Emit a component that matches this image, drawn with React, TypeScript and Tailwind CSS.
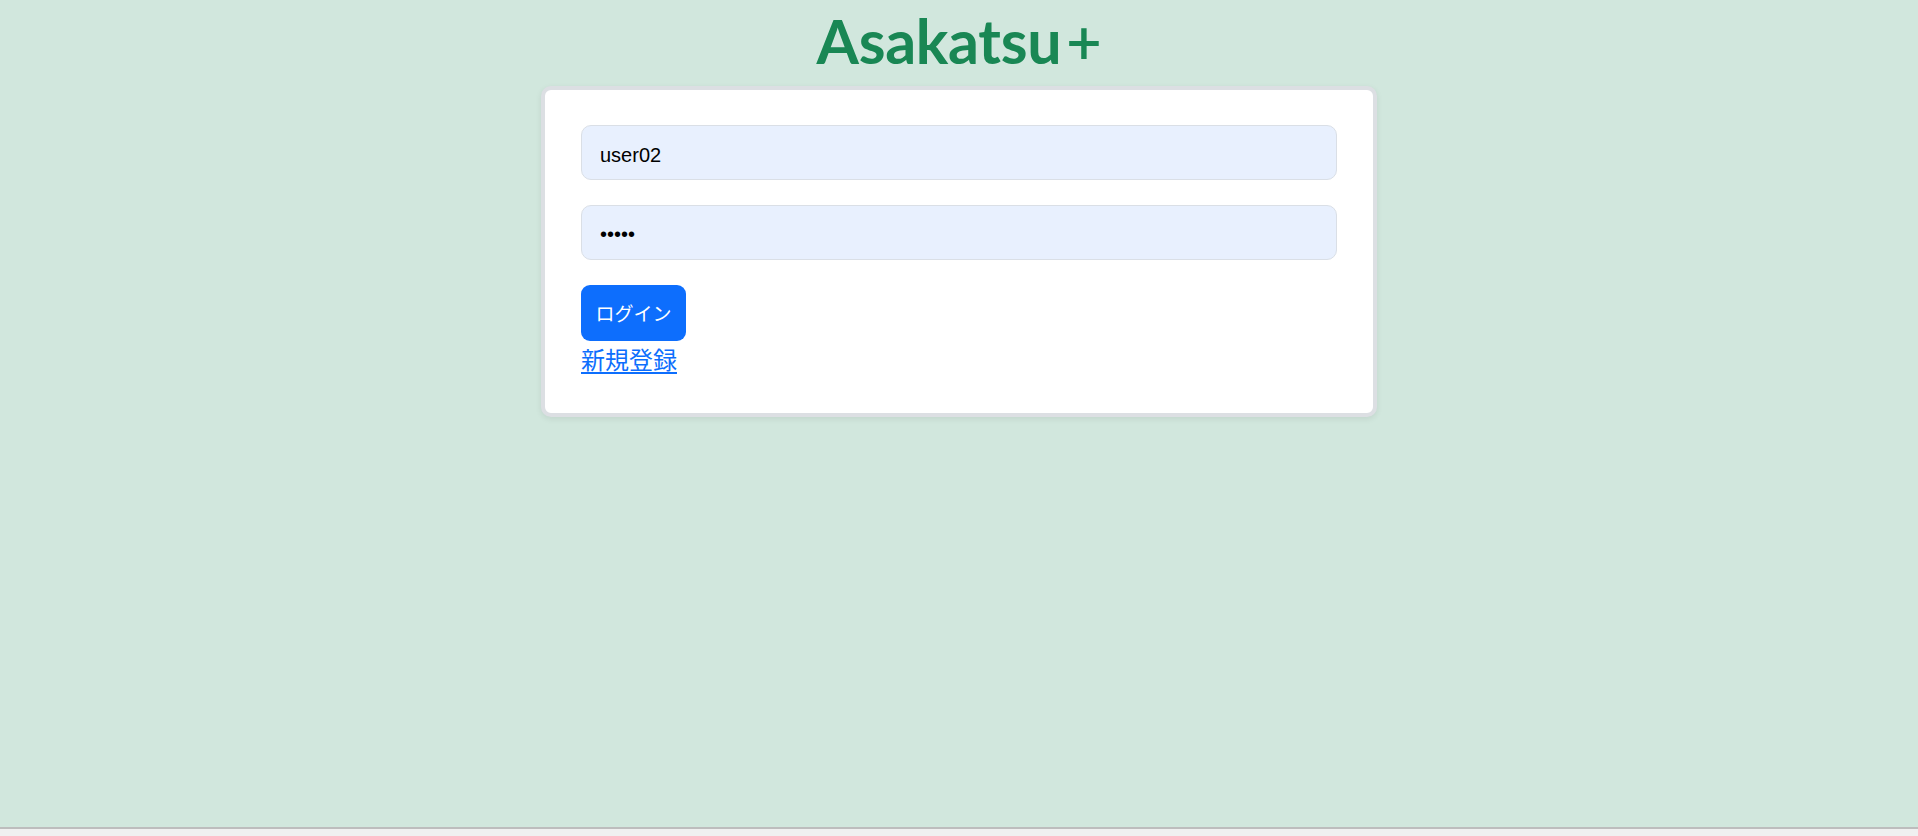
import React from "react";

export default function App() {
  return (
    <div className="w-[1918px] h-[836px] flex flex-col overflow-hidden" style={{ fontFamily: '"Liberation Sans", Arial, sans-serif' }}>
      <div className="flex-1 bg-[#d1e7dd] flex flex-col items-center">
        <h1
          className="mt-[10px] text-[61px] leading-none font-bold text-[#198754] tracking-[-0.3px]"
          style={{ fontFamily: 'Lato, "Open Sans", sans-serif' }}
        >
          Asakatsu<span className="ml-[5px] font-semibold">+</span>
        </h1>
        <div className="mt-[15px] w-[836px] bg-white border-[4px] border-[#dcdfe3] rounded-[10px] shadow-[0_2px_6px_rgba(0,0,0,0.08)] px-[36px] pt-[35px] pb-[36px] flex flex-col">
          <input
            readOnly
            defaultValue="user02"
            className="h-[55px] w-full rounded-[10px] border border-[#dadfe6] bg-[#e8f0fe] pl-[18px] pr-[19px] pt-[5px] text-[20px] text-black outline-none"
            style={{ fontFamily: '"Liberation Sans", Arial, sans-serif' }}
          />
          <input
            readOnly
            type="password"
            defaultValue="abcde"
            className="mt-[25px] h-[55px] w-full rounded-[10px] border border-[#dadfe6] bg-[#e8f0fe] pl-[18px] pr-[19px] pt-[3px] text-[20px] text-black outline-none"
            style={{ fontFamily: '"Liberation Sans", Arial, sans-serif' }}
          />
          <div className="mt-[25px] flex">
            <button
              className="h-[56px] w-[105px] rounded-[9px] bg-[#0d6efd] text-white text-[19px] flex items-center justify-center"
              style={{ fontFamily: '"Noto Sans CJK JP", "Noto Sans", sans-serif' }}
            >
              ログイン
            </button>
          </div>
          <div className="flex">
            <a
              href="#"
              className="text-[24px] leading-[36px] text-[#0d6efd] underline underline-offset-[3px]"
              style={{ fontFamily: '"Noto Sans CJK JP", "Noto Sans", sans-serif' }}
            >
              新規登録
            </a>
          </div>
        </div>
      </div>
      <div className="h-[2px] bg-[#bdbdbd]" />
      <div className="h-[7px] bg-[#f0f0f0]" />
    </div>
  );
}
